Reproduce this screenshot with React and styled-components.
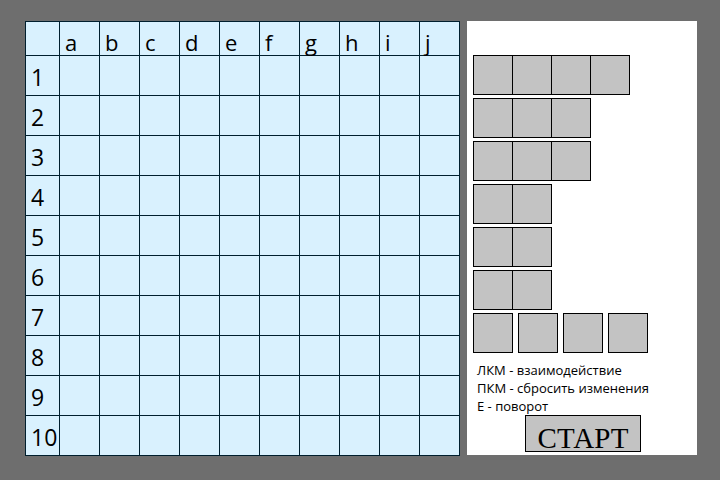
import React from "react";
import styled, { createGlobalStyle } from "styled-components";

const GlobalStyle = createGlobalStyle`
  *, *::before, *::after { box-sizing: border-box; }
  body {
    margin: 0;
    background: #6e6e6e;
    color: #000;
    font-family: "Open Sans", "Noto Sans", sans-serif;
  }
`;

const Page = styled.main`
  display: grid;
  grid-template-columns: minmax(0, 435fr) minmax(0, 230fr);
  align-items: start;
  gap: 7px;
  padding: 21px 23px 24px 25px;
`;

const Board = styled.table`
  width: 100%;
  table-layout: fixed;
  border-collapse: separate;
  border-spacing: 0;
  border: solid #001f2e;
  border-width: 1px 0 0 1px;
  background: #d9f1fe;
`;

const Cell = styled.td`
  height: 40px;
  padding: 0;
  border: solid #001f2e;
  border-width: 0 1px 1px 0;
`;

const Corner = styled(Cell)`
  width: 34px;
  height: 34px;
`;

const ColumnLabel = styled(Cell).attrs({ as: "th", scope: "col" })`
  height: 34px;
  padding: 6px 0 0 5px;
  font-size: 22px;
  line-height: 24px;
  font-weight: 400;
  text-align: left;
`;

const RowLabel = styled(Cell).attrs({ as: "th", scope: "row" })`
  padding: 2px 0 0 5px;
  font-size: 23px;
  line-height: 24px;
  font-weight: 400;
  text-align: left;
`;

const Panel = styled.aside`
  display: flex;
  flex-direction: column;
  padding: 34px 4px 3px 6px;
  background: #fff;
`;

const Fleet = styled.div`
  display: flex;
  flex-direction: column;
  gap: 3px;
`;

const FleetRow = styled.div`
  display: flex;
  gap: 5px;
`;

const Ship = styled.button`
  display: flex;
  padding: 0;
  border: solid #000;
  border-width: 1px 0 1px 1px;
  background: #c3c3c3;
  cursor: pointer;
`;

const Deck = styled.span`
  width: 39px;
  height: 38px;
  border-right: 1px solid #000;
`;

const Hints = styled.ul`
  list-style: none;
  margin: 8px 0 0;
  padding: 0 4px;
  font-size: 13px;
  line-height: 18px;
`;

const Hint = styled.li`
  white-space: nowrap;
`;

const StartButton = styled.button`
  align-self: center;
  width: 116px;
  height: 37px;
  padding: 8px 0 0;
  border: 1px solid #000;
  background: #c3c3c3;
  color: #000;
  font-family: "Liberation Serif", serif;
  font-size: 29px;
  line-height: 29px;
  cursor: pointer;
`;

const columns = ["a", "b", "c", "d", "e", "f", "g", "h", "i", "j"];
const rows = [1, 2, 3, 4, 5, 6, 7, 8, 9, 10];
const fleet = [[4], [3], [3], [2], [2], [2], [1, 1, 1, 1]];
const hints = ["ЛКМ - взаимодействие", "ПКМ - сбросить изменения", "E - поворот"];

export default function App() {
  return (
    <>
      <GlobalStyle />
      <Page>
        <Board>
          <thead>
            <tr>
              <Corner />
              {columns.map((name) => (
                <ColumnLabel key={name}>{name}</ColumnLabel>
              ))}
            </tr>
          </thead>
          <tbody>
            {rows.map((row) => (
              <tr key={row}>
                <RowLabel>{row}</RowLabel>
                {columns.map((name) => (
                  <Cell key={name} />
                ))}
              </tr>
            ))}
          </tbody>
        </Board>
        <Panel>
          <Fleet>
            {fleet.map((ships, i) => (
              <FleetRow key={i}>
                {ships.map((size, j) => (
                  <Ship key={j} type="button" aria-label={`${size}`}>
                    {Array.from({ length: size }, (_, k) => (
                      <Deck key={k} />
                    ))}
                  </Ship>
                ))}
              </FleetRow>
            ))}
          </Fleet>
          <Hints>
            {hints.map((text) => (
              <Hint key={text}>{text}</Hint>
            ))}
          </Hints>
          <StartButton type="button">СТАРТ</StartButton>
        </Panel>
      </Page>
    </>
  );
}
